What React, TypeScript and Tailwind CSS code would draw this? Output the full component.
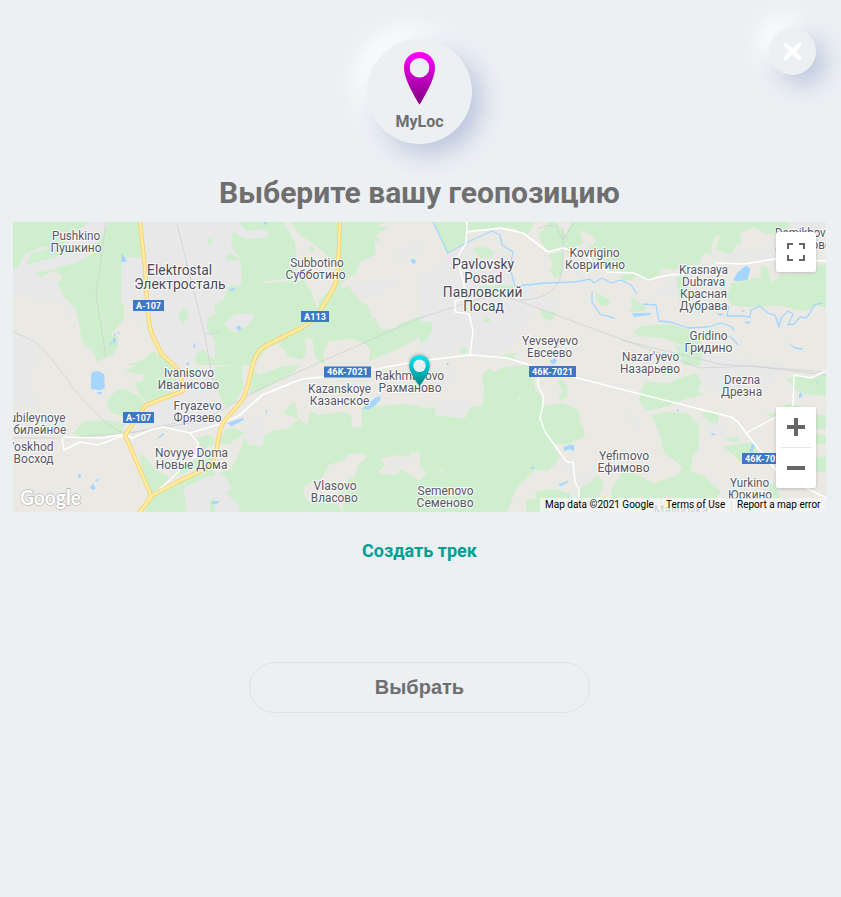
import React from "react";

const GREEN = "#ceeecd";
const URBAN = "#e8e8e8";
const LAND = "#ebe9e4";
const WATER = "#a5d6ff";

type Area = [string, string];

// Each sector is drawn on a grid three times finer than the map canvas.
const sectors: { x: number; y: number; areas: Area[] }[] = [
  {
    x: 10,
    y: 218,
    areas: [
      [GREEN, "9,12 390,12 400,118 350,118 337,130 333,250 342,270 340,305 302,350 325,358 325,385 308,412 290,415 262,432 248,400 215,372 210,330 197,275 160,235 148,215 140,190 155,190 155,170 130,160 95,175 60,165 9,180"],
      [URBAN, "9,158 25,145 45,110 75,95 90,85 120,90 100,100 65,105 50,140 120,122 200,100 265,70 298,12 235,12 195,45 160,80 270,85 260,100 225,120 195,135 110,158 9,180"],
      [GREEN, "95,95 140,88 190,90 175,100 110,118 70,130"],
      [URBAN, "335,125 400,118 392,12 640,12 640,450 490,450 425,345 400,312 370,310 372,280 335,255"],
      [URBAN, "9,180 60,165 95,175 140,190 160,235 200,275 200,290 170,310 165,300 190,275 130,240 80,240 9,235"],
      [URBAN, "9,340 70,370 72,450 9,450"],
      [GREEN, "592,300 640,275 640,375 610,362 590,335"],
      [GREEN, "505,292 520,272 533,280 535,290 522,318 507,302"],
      [GREEN, "590,66 605,60 608,76 596,82"],
      [GREEN, "470,96 478,94 476,100"],
      [GREEN, "375,450 350,440 400,425 430,400 470,425 490,450"],
      [GREEN, "555,410 580,395 610,425 630,420 630,450 560,450"],
      [WATER, "335,105 352,130 334,133"],
      [WATER, "308,362 318,360 316,376 308,376"],
      [WATER, "298,378 306,374 306,382"],
      [WATER, "310,350 317,346 316,356"],
      [WATER, "323,340 330,345 323,349"],
      [WATER, "553,372 558,390 549,388"],
      [WATER, "530,434 538,432 536,442 528,440"],
    ],
  },
  {
    x: 215,
    y: 218,
    areas: [
      [GREEN, "0,12 640,12 640,450 0,450"],
      [URBAN, "0,12 70,12 50,55 50,90 75,120 80,175 78,200 40,205 30,240 0,262"],
      [GREEN, "30,115 48,108 75,125 60,128 34,124"],
      [URBAN, "70,12 95,40 145,32 165,45 150,60 90,64 55,40"],
      [LAND, "205,12 228,12 250,48 300,80 350,125 378,145 365,195 350,210 310,250 308,275 290,225 262,175 222,135 245,115 240,75"],
      [GREEN, "280,88 292,84 300,95 288,102"],
      [LAND, "140,190 260,176 265,186 145,196"],
      [LAND, "510,12 640,12 640,286 610,297 560,315 540,330 500,335 480,300 464,306 468,290 400,205 380,212 376,198 425,165 437,130 482,110 480,70 495,68 482,50 520,30 485,25"],
      [URBAN, "400,205 460,190 560,180 510,210 455,240 430,245"],
      [URBAN, "520,135 575,82 640,70 640,105 590,110"],
      [GREEN, "412,230 424,225 424,255 455,258 470,295 460,310 430,250"],
      [URBAN, "28,315 60,288 115,286 116,300 98,322 60,345 32,325"],
      [LAND, "118,450 130,420 160,386 250,360 300,362 350,370 410,362 455,380 466,395 462,430 550,392 640,345 640,450"],
      [GREEN, "190,382 220,365 270,360 274,398 262,425 220,415 210,395"],
      [GREEN, "292,365 330,358 340,375 325,405 330,440 305,425 296,398"],
      [WATER, "146,12 156,12 156,19 147,19"],
      [WATER, "45,212 60,210 58,218 46,219"],
      [WATER, "64,328 74,322 80,332 70,340"],
      [WATER, "586,128 596,121 604,132 596,138"],
    ],
  },
  {
    x: 420,
    y: 218,
    areas: [
      [LAND, "0,12 640,12 640,450 0,450"],
      [URBAN, "0,175 60,150 90,110 145,85 210,90 250,110 270,160 285,210 345,195 350,240 430,250 395,285 350,260 320,330 280,335 290,380 190,420 100,400 0,425"],
      [GREEN, "40,12 138,12 136,75 100,90 82,108 65,70"],
      [GREEN, "145,12 345,12 322,50 300,45 285,30 145,35"],
      [GREEN, "158,95 175,86 205,90 220,102 218,118 180,120"],
      [GREEN, "355,52 385,12 410,12 430,40 440,60 430,90 390,102 368,80"],
      [GREEN, "455,12 640,12 640,165 600,160 540,155 510,130 470,120 435,95 432,60"],
      [LAND, "478,35 522,55 528,72 505,90 515,130 560,150 575,165 450,140 462,90 490,75"],
      [GREEN, "385,110 430,100 425,175 402,180 390,155 400,140"],
      [GREEN, "180,205 280,200 285,240 200,240"],
      [GREEN, "525,222 570,245 566,262 545,265 528,245"],
      [GREEN, "0,310 35,312 38,335 20,370 0,375"],
      [GREEN, "360,275 405,282 402,300 385,310 366,295"],
      [GREEN, "195,298 212,300 210,312 190,312"],
      [GREEN, "118,388 140,390 138,408 120,405"],
      [GREEN, "245,415 270,405 290,405 280,425"],
      [GREEN, "0,430 20,425 30,450 0,450"],
      [WATER, "388,430 405,420 412,428 400,440"],
      [WATER, "78,434 86,434 83,446"],
    ],
  },
  {
    x: 621,
    y: 218,
    areas: [
      [LAND, "0,12 615,12 615,450 0,450"],
      [GREEN, "0,12 505,12 505,45 465,50 430,45 400,28 358,45 362,75 345,80 330,112 285,95 290,70 300,55 285,50 270,85 272,110 290,120 255,105 240,120 235,140 185,140 160,155 120,150 115,170 80,185 0,165"],
      [URBAN, "505,12 615,12 615,45 505,45"],
      [URBAN, "310,112 360,102 430,95 465,85 465,120 310,130"],
      [URBAN, "100,225 165,175 180,185 170,240 110,230"],
      [GREEN, "330,195 420,178 420,145 440,150 450,195 480,170 580,168 590,140 615,140 615,270 590,262 550,280 470,262 385,268 330,262 320,235"],
      [GREEN, "165,178 200,165 205,240 175,250"],
      [GREEN, "28,235 55,255 75,262 72,280 35,282 22,278 35,262"],
      [GREEN, "0,170 45,168 35,185 0,188"],
      [GREEN, "35,345 60,325 110,320 160,320 210,338 245,380 230,410 190,385 130,360 60,355"],
      [GREEN, "160,380 260,400 240,440 190,450 180,420"],
      [GREEN, "345,445 380,422 385,448"],
      [URBAN, "240,410 350,420 450,450 240,450"],
      [WATER, "336,187 348,165 375,142 388,152 380,185 350,190"],
      [WATER, "34,286 92,284 85,291 38,297"],
      [WATER, "498,372 520,386 548,392 540,396 518,391"],
      [WATER, "362,278 371,276 368,285"],
      [WATER, "368,312 390,310 382,319"],
      [WATER, "285,286 312,288 296,294"],
    ],
  },
  {
    x: 10,
    y: 365,
    areas: [
      [LAND, "9,0 630,0 630,441 9,441"],
      [URBAN, "9,0 72,0 65,78 100,115 60,120 9,115"],
      [URBAN, "415,60 500,90 540,30 630,0 630,185 560,200 470,185 430,175 400,190 380,180"],
      [GREEN, "378,0 490,0 500,55 460,75 500,88 410,112 385,85 375,50 395,50 410,30 345,20"],
      [GREEN, "290,118 300,95 320,75 345,72 395,98 405,122 385,160 345,155 305,145"],
      [GREEN, "190,205 220,170 290,165 345,178 335,205 220,218"],
      [GREEN, "388,265 405,275 430,310 480,340 425,388 395,310"],
      [GREEN, "480,340 530,290 600,275 630,260 630,441 405,441 425,398 510,350 580,325 610,290"],
      [GREEN, "560,220 600,210 625,230 580,255"],
      [URBAN, "520,370 590,335 630,330 630,390 600,405 600,441 530,441"],
      [WATER, "243,40 245,22 265,18 283,28 284,70 270,76 243,72"],
      [WATER, "262,81 276,81 274,88 262,87"],
      [WATER, "243,362 249,355 254,365 258,370 248,375 240,368"],
      [WATER, "203,330 211,327 213,337 208,342"],
      [WATER, "254,346 267,341 263,350"],
      [WATER, "440,222 460,203 462,208 450,218"],
      [WATER, "604,412 618,407 630,411 626,417 606,418"],
    ],
  },
  {
    x: 215,
    y: 365,
    areas: [
      [GREEN, "0,0 630,0 630,441 0,441"],
      [LAND, "0,0 640,0 640,125 560,118 500,122 440,132 440,188 410,186 410,150 375,140 310,150 285,135 278,180 250,162 220,190 175,198 150,210 140,245 100,238 90,210 70,270 60,290 50,310 0,330"],
      [URBAN, "85,215 110,165 140,145 150,180 150,215 140,245 105,235"],
      [URBAN, "0,320 30,335 50,370 35,385 75,425 70,441 0,441"],
      [GREEN, "0,5 80,0 85,70 60,110 30,125 0,60"],
      [GREEN, "112,5 130,30 200,5 260,0 225,30 140,75 105,90"],
      [GREEN, "55,188 90,205 40,238 10,235 30,195"],
      [GREEN, "205,140 240,108 250,160 218,150"],
      [GREEN, "50,340 62,332 60,358 52,362"],
      [LAND, "265,390 268,365 325,335 340,300 385,285 402,268 440,264 455,275 430,300 420,332 400,345 390,375 350,395 385,410 385,436 375,436 370,415 300,415 280,410"],
      [LAND, "487,325 510,300 495,280 550,270 580,275 590,262 640,262 640,335 610,345 590,330 560,315 540,330"],
      [URBAN, "515,290 580,280 605,285 560,300 520,305"],
      [WATER, "440,132 480,98 497,92 496,105 480,122 462,133"],
      [WATER, "36,175 84,158 87,164 50,184"],
      [WATER, "150,140 158,132 155,146"],
      [WATER, "0,408 12,409 6,417 0,415"],
    ],
  },
  {
    x: 420,
    y: 365,
    areas: [
      [LAND, "0,0 630,0 630,441 0,441"],
      [URBAN, "0,0 115,25 60,70 0,85"],
      [GREEN, "0,128 45,128 48,150 135,160 150,125 186,124 192,70 185,30 205,12 320,0 340,45 345,75 368,95 368,120 358,160 420,280 385,318 345,315 290,368 262,441 0,441"],
      [URBAN, "62,105 145,110 135,158 45,150"],
      [LAND, "0,310 20,325 0,345"],
      [LAND, "60,312 75,318 62,324"],
      [LAND, "205,12 235,0 245,8 225,22"],
      [LAND, "290,108 298,95 302,108"],
      [GREEN, "368,122 430,115 475,135 482,160 475,170 490,190 495,215 462,228 450,240 400,235 358,170 360,145"],
      [GREEN, "410,50 425,42 442,62 440,95 420,108 415,95 430,78"],
      [GREEN, "345,380 400,372 450,385 442,441 318,441 318,405 350,400"],
      [GREEN, "475,375 500,355 535,330 550,355 545,375 530,410 475,420"],
      [GREEN, "575,370 600,335 630,322 630,410 575,410"],
      [URBAN, "435,300 460,295 465,345 540,325 500,360 460,360"],
      [WATER, "432,245 445,242 448,240 462,240 462,258 447,253 432,258"],
      [WATER, "330,309 342,303 340,314"],
      [WATER, "416,358 445,347 442,354 420,364"],
    ],
  },
  {
    x: 621,
    y: 365,
    areas: [
      [LAND, "0,0 615,0 615,441 0,441"],
      [URBAN, "240,0 500,0 460,50 370,60 330,100 260,70"],
      [URBAN, "15,135 30,135 50,205 30,180"],
      [GREEN, "70,50 145,55 175,40 225,25 243,50 230,75 245,90 200,100 120,130 75,135 55,110 60,80"],
      [GREEN, "92,150 135,140 200,145 235,180 232,250 215,270 210,320 245,330 300,380 285,400 0,400 0,310 60,335 100,355 170,330 185,305 130,265 110,190"],
      [GREEN, "240,145 265,138 295,145 290,178 265,170"],
      [GREEN, "305,245 350,238 400,230 410,260 400,285 360,292 340,270"],
      [GREEN, "310,222 345,215 360,230 330,230"],
      [URBAN, "260,188 300,175 320,205 285,220"],
      [GREEN, "495,42 525,32 570,40 615,25 615,92 550,88 525,75"],
      [GREEN, "435,148 470,142 500,115 540,125 500,150 460,160"],
      [GREEN, "585,150 615,150 615,195 585,190"],
      [GREEN, "585,205 615,212 615,240 585,235"],
      [GREEN, "585,275 615,275 615,320 585,320"],
      [GREEN, "440,360 460,355 480,400 450,400"],
      [WATER, "392,236 402,240 394,262 386,262"],
      [WATER, "532,95 538,80 545,92 536,99"],
      [WATER, "586,54 592,48 589,62"],
      [WATER, "166,135 174,132 171,143"],
      [WATER, "268,204 284,206 278,213"],
    ],
  },
];

const rails = [
  "M13 332L32 340C38 343 46 352 53 361L83 400C95 412 108 428 122 432H136L214 414L262 388L420 318L482 298L505 296L640 346L700 368L752 366L826 375",
  "M177 224L204 332L215 392",
  "M106 222L96 295L106 358",
  "M205 333Q212 336 220 330",
  "M563 228V260Q563 300 520 300",
  "M537 229Q548 224 556 226L563 240L574 222",
  "M13 438H60L130 433L220 418",
  "M621 340L720 364L826 372",
];

const rivers = [
  "M433 222L448 253L457 248L470 241L492 231L500 235L502 245L513 252L510 268L515 286L547 283L575 282L590 279L594 283L602 278L611 283L621 280L631 285L637 294",
  "M592 292L592 302L600 314L614 318",
  "M643 304L656 305L659 321L671 322L688 328L708 327L721 323L732 327L734 331",
  "M724 334L732 338L738 345",
  "M729 306L727 316L742 316L750 317L751 310L760 306L768 313L775 315L779 327L781 318L788 311L793 314L788 325L794 324L800 317L806 318L810 313L814 305L822 303",
];

const whiteRoads: [string, number][] = [
  ["M63 437L103 438L125 434L132 438L150 430L163 427L190 433L220 424L240 415L262 395L302 379L345 375L408 363L429 360L470 355L507 358L540 368L577 378L731 417L738 422L746 433L778 473L826 498", 1.7],
  ["M62 437L64 450L80 442L98 445L125 435", 1.4],
  ["M190 433L198 443L196 455L153 496", 1.4],
  ["M746 433L776 417L793 406L794 375L811 378L826 371", 1.4],
  ["M467 222L466 243L457 258L464 285L465 298L455 301L455 312L469 314L473 331L470 355", 1.4],
  ["M467 232L500 228L523 233L548 252L563 248L585 255L608 272L634 273L648 280L668 275L700 273L718 263L744 264L775 259L826 261", 1.6],
  ["M538 370L538 386L543 395L543 405L540 418L545 432L567 462L573 462L575 482L579 490V512", 1.4],
];

const yellowRoads = [
  "M140 222L145 268L147.5 308Q149 325 151.5 333L161.5 354L176 367L182 382L183 391L146 405L125 435L150 493Q151 500 139 513",
  "M340 222L338 268Q337 283 332 291L320 311Q315 322 295 331L265 346Q255 352 252 368L247 388Q244 400 238 405L223 423Q218 435 217.5 445Q215 464 207 468L177 482L153 495L138 514",
];

// text, centre x, baseline y, drawn width
const towns: [string, number, number, number][] = [
  ["Pushkino", 76.5, 240, 48], ["Пушкино", 76.5, 252, 51],
  ["Subbotino", 317.3, 267, 53.5], ["Субботино", 316, 279, 60],
  ["Kovrigino", 595, 257, 50], ["Ковригино", 595.5, 269, 60],
  ["Krasnaya", 704, 274, 49], ["Dubrava", 704, 286, 43], ["Красная", 704, 298, 47], ["Дубрава", 704, 310, 48],
  ["Gridino", 709, 340, 38], ["Гридино", 709, 352, 48],
  ["Nazar'yevo", 651, 361, 57], ["Назарьево", 650.5, 373, 60],
  ["Yevseyevo", 550.5, 345, 56], ["Евсеево", 550, 357, 45],
  ["Drezna", 742.5, 384, 36], ["Дрезна", 742, 396, 41],
  ["Yurkino", 750, 487, 39], ["Юркино", 750.5, 499, 44],
  ["Yefimovo", 624.5, 460, 50], ["Ефимово", 624, 472, 52],
  ["Semenovo", 446, 495, 56], ["Семеново", 445.5, 507, 57],
  ["Vlasovo", 335.5, 490, 43], ["Власово", 334.7, 502, 47],
  ["Kazanskoye", 340, 393, 63], ["Казанское", 340, 405, 59.5],
  ["Rakhmanovo", 410, 380, 69], ["Рахманово", 410.5, 392, 63],
  ["Ivanisovo", 189.3, 377, 50], ["Иванисово", 189, 389, 61.5],
  ["Fryazevo", 198, 410, 48], ["Фрязево", 198, 422, 48],
  ["Novyye Doma", 192, 457, 73], ["Новые Дома", 192, 469, 71.5],
  ["Yubileynoye", 34.5, 422, 63], ["Юбилейное", 35, 434, 63],
  ["Voskhod", 30.5, 451, 47], ["Восход", 34, 463, 40],
  ["Demikhovo", 804, 237, 57], ["Демихово", 804, 249, 56],
  ["Malinovka", 681.5, 514, 54],
];

const cities: [string, number, number, number][] = [
  ["Elektrostal", 180, 275, 65], ["Электросталь", 180.3, 289, 91.5],
  ["Pavlovsky", 483.5, 269, 62], ["Posad", 483.7, 283, 38],
  ["Павловский", 483, 297, 79.5], ["Посад", 484, 311, 40.5],
];

const shields: [string, number, number, number][] = [
  ["A-107", 133, 300, 31], ["A113", 301, 311, 28], ["46K-7021", 324, 366.5, 47],
  ["46K-7021", 529, 366, 47], ["A-107", 123, 412, 31], ["46K-7021", 742, 453, 47],
];

function MapCanvas() {
  return (
    <svg viewBox="13 222 813 290" width="813" height="290" className="block font-[Roboto,sans-serif]">
      <rect x="13" y="222" width="813" height="290" fill={LAND} />
      {sectors.map((s) => (
        <g key={`${s.x}-${s.y}`} transform={`translate(${s.x} ${s.y}) scale(0.33333)`}>
          {s.areas.map(([fill, points], i) => (
            <polygon key={i} points={points} fill={fill} />
          ))}
        </g>
      ))}
      <g fill="none" strokeLinejoin="round">
        {rails.map((d) => <path key={d} d={d} stroke="#cfd0d2" strokeWidth=".8" />)}
        {rivers.map((d) => <path key={d} d={d} stroke={WATER} strokeWidth="1.3" />)}
        {whiteRoads.map(([d, w]) => <path key={d} d={d} stroke="#fff" strokeWidth={w} />)}
        {yellowRoads.map((d) => <path key={d} d={d} stroke="#f6cf65" strokeWidth="4.2" />)}
        {yellowRoads.map((d) => <path key={d} d={d} stroke="#ffeba1" strokeWidth="2.6" />)}
      </g>
      <g textAnchor="middle" stroke="#fff" strokeWidth="2.2" strokeLinejoin="round" paintOrder="stroke" strokeOpacity=".8">
        {towns.map(([t, x, y, w]) => (
          <text key={t} x={x - 0.4} y={y + 0.3} textLength={w} lengthAdjust="spacingAndGlyphs" fontSize="12" fill="#575764">{t}</text>
        ))}
        {cities.map(([t, x, y, w]) => (
          <text key={t} x={x - 0.4} y={y} textLength={w} lengthAdjust="spacingAndGlyphs" fontSize="14" fill="#494955">{t}</text>
        ))}
      </g>
      {shields.map(([t, x, y, w], i) => (
        <g key={i}>
          <rect x={x} y={y} width={w} height="11" fill="#3b78c8" />
          <text x={x + w / 2} y={y + 8.8} textAnchor="middle" textLength={w - 6} fontSize="9" fontWeight="700" fill="#fff">{t}</text>
        </g>
      ))}
      <text x="20" y="504.5" textLength="61" lengthAdjust="spacingAndGlyphs" fontSize="20" fontWeight="700" fill="#fff" stroke="#9a9a9a" strokeWidth="1.4" strokeOpacity=".7" paintOrder="stroke" fontFamily="Lato, sans-serif">Google</text>
      <defs>
        <linearGradient id="cyanPin" x1="0" y1="0" x2="0" y2="1">
          <stop offset="0" stopColor="#00e8f2" />
          <stop offset="1" stopColor="#008484" />
        </linearGradient>
        <filter id="pinShade" x="-50%" y="-50%" width="200%" height="200%">
          <feDropShadow dx="0" dy="-1" stdDeviation="1.5" floodColor="#555" floodOpacity=".45" />
        </filter>
      </defs>
      <path filter="url(#pinShade)" fill="url(#cyanPin)" d="M419.5 355.3C413.7 355.3 409.2 359.8 409.2 365.5C409.2 372 415 380 419.5 386C424 380 429.8 372 429.8 365.5C429.8 359.8 425.3 355.3 419.5 355.3Z" />
      <circle cx="419.5" cy="365.7" r="6.3" fill="#e9eef1" />
    </svg>
  );
}

function MapView() {
  return (
    <section className="relative h-[290px] w-[813px] overflow-hidden">
      <MapCanvas />
      <button className="absolute top-[10px] right-[10px] flex size-10 items-center justify-center rounded-[2px] bg-white shadow-[0_1px_4px_-1px_rgba(0,0,0,0.3)]">
        <svg width="18" height="18" viewBox="0 0 18 18" fill="#666">
          <path d="M0 0V6H2V2H6V0ZM16 0H12V2H16V6H18V0ZM16 16H12V18H18V12H16ZM2 12H0V18H6V16H2Z" />
        </svg>
      </button>
      <div className="absolute right-[10px] bottom-[24px] flex h-[81px] w-10 flex-col items-center rounded-[2px] bg-white shadow-[0_1px_4px_-1px_rgba(0,0,0,0.3)]">
        <button className="flex h-10 w-full items-center justify-center">
          <svg width="18" height="18" viewBox="0 0 18 18" fill="#666"><path d="M7 0H11V7H18V11H11V18H7V11H0V7H7Z" /></svg>
        </button>
        <span className="h-px w-[30px] bg-[#e6e6e6]" />
        <button className="flex h-10 w-full items-center justify-center">
          <svg width="18" height="18" viewBox="0 0 18 18" fill="#666"><path d="M0 7H18V11H0Z" /></svg>
        </button>
      </div>
      <div className="absolute right-0 bottom-0 flex h-[14px] font-[Roboto,sans-serif] text-[10px] leading-[14px] whitespace-nowrap text-black">
        <span className="w-[120px] bg-[#f5f5f5]/75 pl-[5px]">Map data ©2021 Google</span>
        <span className="w-[71px] border-l border-[#e4e9e4] bg-[#f5f5f5]/75 pl-[5px]">Terms of Use</span>
        <span className="w-[95px] border-l border-[#e4e9e4] bg-[#f5f5f5]/75 pl-[5px]">Report a map error</span>
      </div>
    </section>
  );
}

export default function App() {
  return (
    <main className="relative h-[897px] w-full overflow-hidden bg-[#ecf0f3] font-[Roboto,sans-serif] text-[#6f6f6f]">
      <button className="absolute top-[28px] right-[25px] flex size-[47px] items-center justify-center rounded-full bg-[#ecf0f3] shadow-[10px_10px_24px_#bcc5dd,-10px_-10px_24px_#ffffff]">
        <svg width="19" height="19" viewBox="0 0 19 19" stroke="#fff" strokeWidth="4" strokeLinecap="round"><path d="M2.5 2.5L16.5 16.5M16.5 2.5L2.5 16.5" /></svg>
      </button>
      <div className="ml-[13px] flex w-[813px] flex-col items-center pt-[39px]">
        <div className="flex size-[105px] flex-col items-center rounded-full bg-[#ecf0f3] pt-[13px] shadow-[10px_10px_24px_#bcc5dd,-10px_-10px_24px_#ffffff]">
          <svg width="31" height="53" viewBox="0 0 31 53">
            <defs>
              <linearGradient id="pinkPin" x1="0" y1="0" x2="0" y2="1">
                <stop offset="0" stopColor="#ff00ff" />
                <stop offset="1" stopColor="#800080" />
              </linearGradient>
            </defs>
            <path fill="url(#pinkPin)" fillRule="evenodd" d="M15.5 0C6.8 0 0 6.8 0 15.5C0 25 6 37 15.5 52.7C25 37 31 25 31 15.5C31 6.8 24.2 0 15.5 0ZM15.5 6A9.8 9.8 0 1 1 15.5 25.6A9.8 9.8 0 1 1 15.5 6Z" />
          </svg>
          <span className="mt-[7px] text-[16px] leading-[20px] font-bold">MyLoc</span>
        </div>
        <h1 className="mt-[30px] h-[48px] text-[30px] leading-[38px] font-bold whitespace-nowrap">Выберите вашу геопозицию</h1>
        <MapView />
        <a className="mt-[27px] text-[18px] leading-[24px] font-bold text-[#009f93]">Создать трек</a>
        <button className="mt-[99px] flex h-[51px] w-[341px] items-center justify-center rounded-full border border-[#e0e2e4] pb-[2px] font-['Liberation_Sans',Arial,sans-serif] text-[20px] font-bold">Выбрать</button>
      </div>
    </main>
  );
}
